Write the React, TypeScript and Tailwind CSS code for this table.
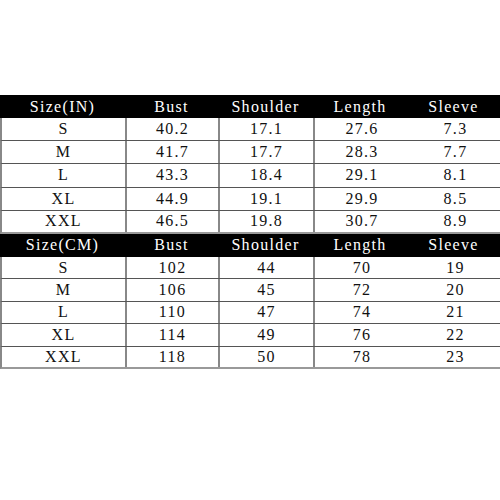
const cols = ["Bust", "Shoulder", "Length", "Sleeve"];

const inches = [
  ["S", "40.2", "17.1", "27.6", "7.3"],
  ["M", "41.7", "17.7", "28.3", "7.7"],
  ["L", "43.3", "18.4", "29.1", "8.1"],
  ["XL", "44.9", "19.1", "29.9", "8.5"],
  ["XXL", "46.5", "19.8", "30.7", "8.9"],
];

const cms = [
  ["S", "102", "44", "70", "19"],
  ["M", "106", "45", "72", "20"],
  ["L", "110", "47", "74", "21"],
  ["XL", "114", "49", "76", "22"],
  ["XXL", "118", "50", "78", "23"],
];

const grid = "grid grid-cols-[125px_93px_95px_94px_93px]";

function SizeTable({ unit, rows, rowH }: { unit: string; rows: string[][]; rowH: string }) {
  return (
    <div>
      <div className={`${grid} h-[23px] bg-black text-white items-center text-center`}>
        <div>Size({unit})</div>
        {cols.map((c) => (
          <div key={c}>{c}</div>
        ))}
      </div>
      {rows.map((r, i) => (
        <div
          key={r[0]}
          className={`${grid} ${rowH} items-center text-center text-[#111] border-l-2 border-[#888] ${
            i < rows.length - 1 ? "border-b-[1.5px] border-b-[#555]" : "border-b-2 border-b-[#999]"
          }`}
        >
          {r.map((v, j) => (
            <div key={j} className={`h-full flex items-center justify-center ${j < 3 ? "border-r-2 border-[#888]" : ""}`}>
              {v}
            </div>
          ))}
        </div>
      ))}
    </div>
  );
}

export default function App() {
  return (
    <div className="w-[500px] h-[500px] bg-white pt-[95px] font-['Liberation_Serif',serif] text-[16px] tracking-[1.3px] leading-none">
      <SizeTable unit="IN" rows={inches} rowH="h-[23.2px]" />
      <SizeTable unit="CM" rows={cms} rowH="h-[22.4px]" />
    </div>
  );
}
